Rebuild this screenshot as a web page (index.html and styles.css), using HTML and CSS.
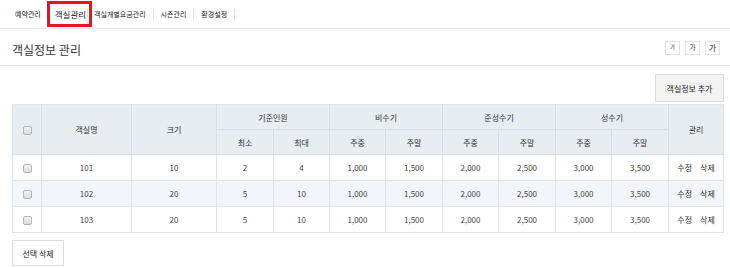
FILE: index.html
```html
<!DOCTYPE html>
<html>
    <head>
        <meta charset="UTF-8">
        <link rel="stylesheet" href="styles.css">
    </head>
    <body>
        <ul class="gnb">
            <li>예약관리</li>
            <li class="on">객실관리</li>
            <li>객실개별요금관리</li>
            <li>시즌관리</li>
            <li>환경설정</li>
        </ul>

        <div class="title-bar">
            <h2>객실정보 관리</h2>
            <div class="font-size">
                <span class="fs s1">가</span>
                <span class="fs s2">가</span>
                <span class="fs s3">가</span>
            </div>
        </div>

        <div class="content">
            <div class="top-btns">
                <button class="btn gray">객실정보 추가</button>
            </div>

            <table class="room-table">
                <colgroup>
                    <col style="width:29px">
                    <col style="width:90px">
                    <col style="width:85px">
                    <col style="width:57px"><col style="width:56px">
                    <col style="width:56px"><col style="width:57px">
                    <col style="width:56px"><col style="width:57px">
                    <col style="width:56px"><col style="width:57px">
                    <col>
                </colgroup>
                <thead>
                    <tr>
                        <th rowspan="2"><span class="chk"></span></th>
                        <th rowspan="2">객실명</th>
                        <th rowspan="2">크기</th>
                        <th colspan="2">기준인원</th>
                        <th colspan="2">비수기</th>
                        <th colspan="2">준성수기</th>
                        <th colspan="2">성수기</th>
                        <th rowspan="2">관리</th>
                    </tr>
                    <tr>
                        <th>최소</th><th>최대</th>
                        <th>주중</th><th>주말</th>
                        <th>주중</th><th>주말</th>
                        <th>주중</th><th>주말</th>
                    </tr>
                </thead>
                <tbody>
                    <tr>
                        <td><span class="chk"></span></td>
                        <td>101</td><td>10</td><td>2</td><td>4</td>
                        <td>1,000</td><td>1,500</td><td>2,000</td><td>2,500</td><td>3,000</td><td>3,500</td>
                        <td class="act"><a>수정</a><a>삭제</a></td>
                    </tr>
                    <tr>
                        <td><span class="chk"></span></td>
                        <td>102</td><td>20</td><td>5</td><td>10</td>
                        <td>1,000</td><td>1,500</td><td>2,000</td><td>2,500</td><td>3,000</td><td>3,500</td>
                        <td class="act"><a>수정</a><a>삭제</a></td>
                    </tr>
                    <tr>
                        <td><span class="chk"></span></td>
                        <td>103</td><td>20</td><td>5</td><td>10</td>
                        <td>1,000</td><td>1,500</td><td>2,000</td><td>2,500</td><td>3,000</td><td>3,500</td>
                        <td class="act"><a>수정</a><a>삭제</a></td>
                    </tr>
                </tbody>
            </table>

            <button class="btn white del">선택 삭제</button>
        </div>
    </body>
</html>
```

FILE: styles.css
```css
body {
    margin: 0;
    font-family: "Noto Sans CJK KR", "Noto Sans", sans-serif;
    color: #444;
    background: #fff;
}

.gnb {
    display: flex;
    align-items: center;
    height: 28px;
    margin: 0;
    padding: 0 0 0 8px;
    list-style: none;
    border-bottom: 1px solid #e8e8e8;
}
.gnb li {
    position: relative;
    padding: 0 7px;
    border-right: 1px solid #ddd;
    font-size: 7px;
    line-height: 10px;
    color: #222;
}
.gnb li.on {
    font-size: 8.5px;
    padding-right: 1px;
    padding-left: 6px;
}
.gnb li.on + li {
    padding-left: 6px;
}
.gnb li.on::after {
    content: "";
    position: absolute;
    left: -2px;
    right: -5px;
    top: -8px;
    bottom: -8px;
    border: 3px solid #e8141c;
}

.title-bar {
    display: flex;
    align-items: center;
    justify-content: space-between;
    height: 32px;
    padding: 4px 10px 0 12px;
    border-bottom: 1px solid #e5e5e5;
}
.title-bar h2 {
    margin: 0;
    font-size: 12px;
    font-weight: normal;
    color: #333;
}
.font-size {
    display: flex;
    gap: 5px;
    margin-top: -3px;
}
.fs {
    display: flex;
    align-items: center;
    justify-content: center;
    width: 13px;
    height: 12px;
    border: 1px solid #e2e2e2;
    color: #333;
    line-height: 1;
}
.fs.s1 { font-size: 5.5px; }
.fs.s2 { font-size: 7px; }
.fs.s3 { font-size: 8px; }

.content {
    padding: 8px 6px 0 12px;
}
.top-btns {
    display: flex;
    justify-content: flex-end;
    margin-bottom: 2px;
}
.btn {
    font-family: inherit;
    font-size: 8px;
    color: #222;
    border: 1px solid #dcdcdc;
    cursor: pointer;
}
.btn.gray {
    width: 69px;
    height: 28px;
    background: #f3f3f3;
}
.btn.white {
    width: 52px;
    height: 26px;
    background: #fff;
}
.btn.del {
    margin-top: 7px;
}

.room-table {
    width: 712px;
    border-collapse: collapse;
    table-layout: fixed;
    font-size: 8px;
}
.room-table th,
.room-table td {
    border: 1px solid #dfe5ea;
    text-align: center;
    padding: 0;
}
.room-table thead th {
    height: 24px;
    background: #e7edf1;
    color: #333;
    font-weight: normal;
    border-color: #d8e0e6;
}
.room-table thead tr:first-child th {
    border-top-color: #e3e8ec;
}
.room-table td {
    height: 25px;
    color: #444;
}
.room-table tbody tr:nth-child(2) td {
    background: #f2f5f9;
}
.room-table td.act a {
    margin: 0 4px;
    color: #333;
}

.chk {
    display: inline-block;
    width: 7px;
    height: 7px;
    border: 1px solid #b5b5b5;
    border-radius: 2px;
    background: linear-gradient(#f4f4f4, #dcdcdc);
    vertical-align: middle;
}
```
